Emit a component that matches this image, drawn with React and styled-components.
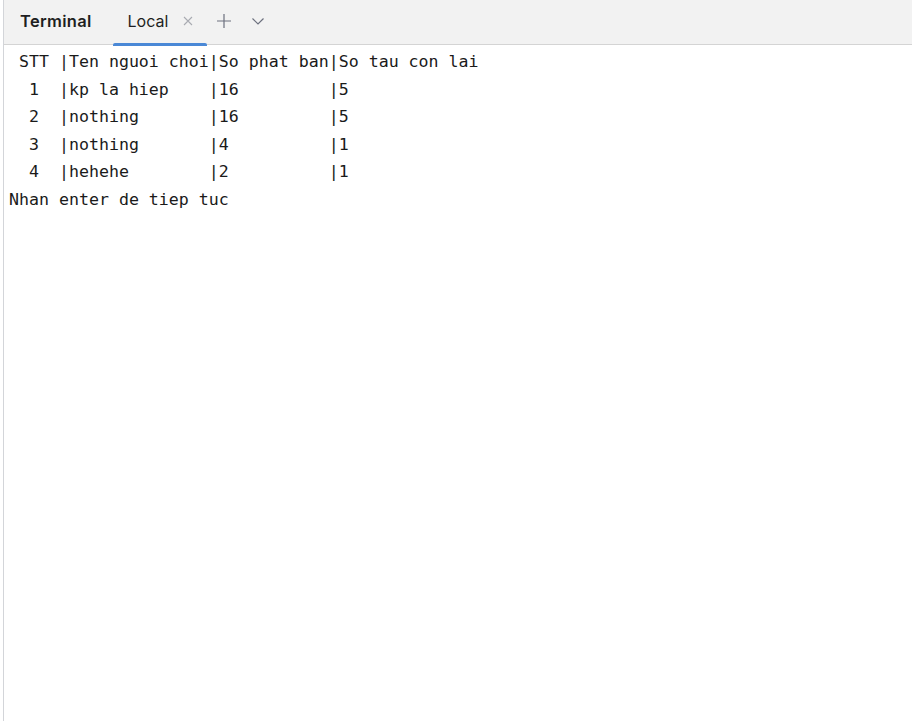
import React from "react";
import styled, { createGlobalStyle } from "styled-components";

const Global = createGlobalStyle`
  html, body { margin: 0; padding: 0; background: #ffffff; }
  body { width: 912px; height: 721px; overflow: hidden; }
`;

const Frame = styled.div`
  margin-left: 3px;
  height: 721px;
  border-left: 1px solid #d3d5d9;
  display: flex;
  flex-direction: column;
  background: #ffffff;
`;

const TabBar = styled.div`
  height: 45px;
  box-sizing: border-box;
  background: #f2f2f2;
  border-bottom: 1px solid #d4d4d4;
  display: flex;
  align-items: stretch;
  padding-left: 16px;
  font-family: Inter, "Noto Sans", sans-serif;
  font-size: 16px;
  color: #1e1f22;
`;

const Title = styled.div`
  display: flex;
  align-items: center;
  font-weight: 600;
  font-size: 16.5px;
  letter-spacing: 0.3px;
  margin-right: 21px;
  padding-bottom: 2px;
`;

const Tab = styled.div`
  position: relative;
  display: flex;
  align-items: center;
  gap: 15px;
  padding: 0 14px 2px 15px;
  &::after {
    content: "";
    position: absolute;
    left: 0;
    right: 0;
    bottom: -2px;
    height: 3px;
    border-radius: 2px 2px 0 0;
    background: ${(p) => (p.$active ? "#4a88d6" : "transparent")};
  }
`;

const IconButton = styled.div`
  display: flex;
  align-items: center;
  justify-content: center;
  width: 34px;
  padding-bottom: 2px;
  color: #6c707e;
`;

const Close = styled.span`
  display: flex;
  color: #a9abb2;
`;

const Output = styled.pre`
  margin: 0;
  padding: 3px 0 0 5px;
  font-family: "DejaVu Sans Mono", "Liberation Mono", monospace;
  font-size: 16.6px;
  line-height: 27.6px;
  color: #1a1a1a;
  white-space: pre;
`;

const lines = [
  " STT |Ten nguoi choi|So phat ban|So tau con lai",
  "  1  |kp la hiep    |16         |5",
  "  2  |nothing       |16         |5",
  "  3  |nothing       |4          |1",
  "  4  |hehehe        |2          |1",
  "Nhan enter de tiep tuc",
];

export default function App() {
  return (
    <>
      <Global />
      <Frame>
        <TabBar>
          <Title>Terminal</Title>
          <Tab $active>
            <span>Local</span>
            <Close>
              <svg width="10" height="10" viewBox="0 0 10 10">
                <path d="M1 1L9 9M9 1L1 9" stroke="currentColor" strokeWidth="1.1" fill="none" />
              </svg>
            </Close>
          </Tab>
          <IconButton>
            <svg width="16" height="16" viewBox="0 0 16 16">
              <path d="M8 1V15M1 8H15" stroke="currentColor" strokeWidth="1.2" fill="none" />
            </svg>
          </IconButton>
          <IconButton>
            <svg width="14" height="14" viewBox="0 0 14 14">
              <path d="M1.5 4.5L7 10L12.5 4.5" stroke="currentColor" strokeWidth="1.2" fill="none" />
            </svg>
          </IconButton>
        </TabBar>
        <Output>{lines.join("\n")}</Output>
      </Frame>
    </>
  );
}
